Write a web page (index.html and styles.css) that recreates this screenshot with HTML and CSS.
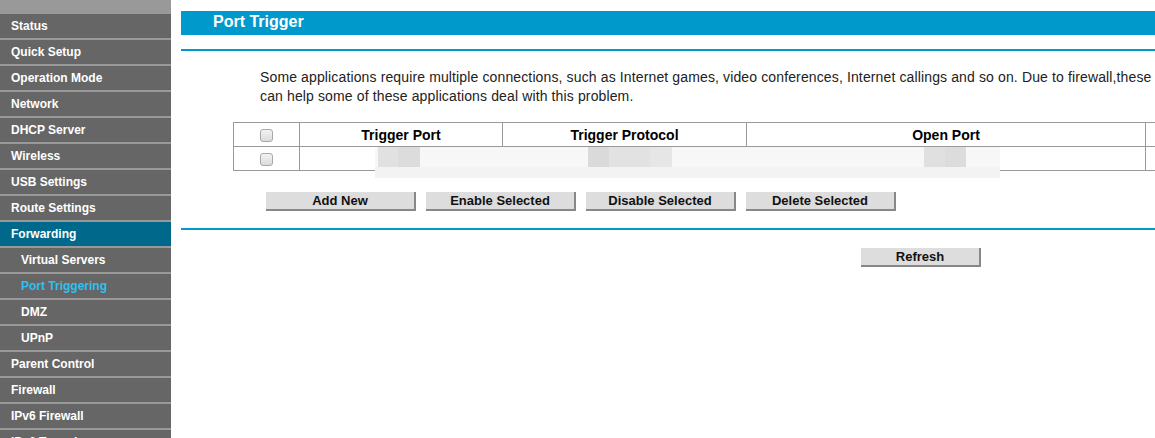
FILE: index.html
```html
<!DOCTYPE html>
<html>
<head>
<meta charset="utf-8">
<title>Port Trigger</title>
<link rel="stylesheet" href="styles.css">
</head>
<body>
<div class="page">
  <nav class="sidebar">
    <div class="side-top"></div>
    <a class="item">Status</a>
    <a class="item">Quick Setup</a>
    <a class="item">Operation Mode</a>
    <a class="item">Network</a>
    <a class="item">DHCP Server</a>
    <a class="item">Wireless</a>
    <a class="item">USB Settings</a>
    <a class="item">Route Settings</a>
    <a class="item active">Forwarding</a>
    <a class="item sub">Virtual Servers</a>
    <a class="item sub current">Port Triggering</a>
    <a class="item sub">DMZ</a>
    <a class="item sub">UPnP</a>
    <a class="item">Parent Control</a>
    <a class="item">Firewall</a>
    <a class="item">IPv6 Firewall</a>
    <a class="item">IPv6 Tunnel</a>
  </nav>
  <main class="main">
    <div class="title-bar">Port Trigger</div>
    <div class="rule"></div>
    <p class="intro">
      <span class="line">Some applications require multiple connections, such as Internet games, video conferences, Internet callings and so on. Due to firewall,these</span>
      <span class="line">can help some of these applications deal with this problem.</span>
    </p>
    <div class="table-wrap">
      <table class="list">
        <colgroup>
          <col class="c-check"><col class="c-tport"><col class="c-tproto"><col class="c-oport"><col class="c-rest">
        </colgroup>
        <tr class="head">
          <td class="center"><input type="checkbox"></td>
          <th>Trigger Port</th>
          <th>Trigger Protocol</th>
          <th>Open Port</th>
          <th></th>
        </tr>
        <tr>
          <td class="center"><input type="checkbox"></td>
          <td></td>
          <td></td>
          <td></td>
          <td></td>
        </tr>
      </table>
      <div class="blur">
        <div class="blur-row">
          <span class="px" style="width:20px;background:#e1e1e1"></span>
          <span class="px" style="width:22px;background:#dcdcdc"></span>
          <span class="gap" style="width:168px"></span>
          <span class="px" style="width:21px;background:#dadada"></span>
          <span class="px" style="width:41px;background:#e2e2e2"></span>
          <span class="px" style="width:22px;background:#e6e6e6"></span>
          <span class="gap" style="width:252px"></span>
          <span class="px" style="width:21px;background:#e0e0e0"></span>
          <span class="px" style="width:21px;background:#dcdcdc"></span>
        </div>
        <div class="blur-bottom"></div>
      </div>
    </div>
    <div class="actions">
      <button class="btn">Add New</button>
      <button class="btn">Enable Selected</button>
      <button class="btn">Disable Selected</button>
      <button class="btn">Delete Selected</button>
    </div>
    <div class="rule rule-2"></div>
    <div class="refresh-row">
      <button class="btn btn-refresh">Refresh</button>
    </div>
  </main>
</div>
</body>
</html>
```

FILE: styles.css
```css
html, body {
  margin: 0;
  padding: 0;
  background: #fff;
  overflow: hidden;
}
body {
  font-family: "Liberation Sans", Arial, sans-serif;
  width: 1155px;
  height: 438px;
}
.page {
  display: flex;
  height: 438px;
  overflow: hidden;
}
.sidebar {
  width: 171px;
  flex: none;
  background: #999;
  display: flex;
  flex-direction: column;
  gap: 2px;
}
.side-top {
  flex: none;
  height: 12px;
}
.item {
  flex: none;
  display: block;
  height: 24px;
  line-height: 24px;
  background: #666;
  color: #fff;
  font-size: 12px;
  font-weight: bold;
  padding-left: 11px;
  white-space: nowrap;
}
.item.sub {
  padding-left: 21px;
}
.item.active {
  background: #00688b;
}
.item.current {
  color: #2cc1f3;
}
.main {
  flex: 1;
  min-width: 0;
  padding: 11px 0 0 10px;
  overflow: hidden;
}
.title-bar {
  height: 24px;
  line-height: 22px;
  background: #0099cc;
  color: #fff;
  font-size: 16px;
  font-weight: bold;
  padding-left: 32px;
}
.rule {
  height: 2px;
  background: #0099cc;
  margin-top: 14px;
}
.intro {
  margin: 17px 0 0 79px;
  font-size: 14px;
  line-height: 19px;
  letter-spacing: 0.13px;
  color: #222;
}
.intro .line {
  display: block;
  white-space: nowrap;
}
.table-wrap {
  position: relative;
  margin: 16px 0 0 52px;
  width: 1100px;
}
.list {
  border-collapse: collapse;
  table-layout: fixed;
  width: 1100px;
  font-size: 14px;
}
.c-check { width: 66px; }
.c-tport { width: 203px; }
.c-tproto { width: 244px; }
.c-oport { width: 399px; }
.c-rest { width: 188px; }
.list td, .list th {
  border: 1px solid #999;
  height: 23px;
  padding: 0;
  text-align: center;
  color: #000;
}
.list th {
  font-weight: bold;
}
.list input[type="checkbox"] {
  appearance: none;
  -webkit-appearance: none;
  margin: 0;
  width: 13px;
  height: 13px;
  border: 1px solid #a8a8a8;
  border-radius: 3px;
  background: linear-gradient(#f2f2f2, #dcdcdc);
  vertical-align: middle;
  box-sizing: border-box;
}
.blur {
  position: absolute;
  left: 142px;
  top: 25px;
  width: 625px;
  height: 31px;
  background: #f7f7f7;
}
.blur-row {
  display: flex;
  height: 20px;
  padding-left: 3px;
}
.blur-row .px, .blur-row .gap {
  display: block;
  height: 20px;
  flex: none;
}
.blur-bottom {
  height: 11px;
  background: #f3f3f3;
}
.actions {
  display: flex;
  gap: 10px;
  margin: 21px 0 0 85px;
}
.btn {
  width: 150px;
  height: 19px;
  padding: 0;
  background: #dddddd;
  border: none;
  border-right: 2px solid #888;
  border-bottom: 2px solid #888;
  font-family: "Liberation Sans", Arial, sans-serif;
  font-size: 13px;
  font-weight: bold;
  color: #111;
  line-height: 17px;
}
.rule-2 {
  margin-top: 17px;
}
.refresh-row {
  display: flex;
  margin: 18px 0 0 680px;
}
.btn-refresh {
  width: 120px;
}
```
